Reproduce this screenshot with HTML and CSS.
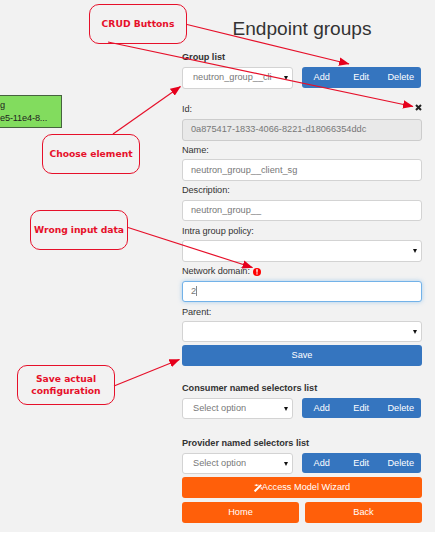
FILE: index.html
```html
<!DOCTYPE html>
<html lang="en">
<head>
<meta charset="utf-8">
<title>Endpoint groups</title>
<link rel="stylesheet" href="styles.css">
</head>
<body>
<div class="node"><div>g</div><div class="node-id">e5-11e4-8...</div></div>
<main class="panel">
  <h1>Endpoint groups</h1>
  <h2>Group list</h2>
  <div class="picker">
    <div class="field select"><span>neutron_group__cli</span></div>
    <div class="crud"><span>Add</span><span>Edit</span><span>Delete</span></div>
  </div>
  <div class="form">
    <div class="label first"><span>Id:</span>
      <svg class="close" viewBox="0 0 7 7"><path d="M1 1L6 6M6 1L1 6"/></svg>
    </div>
    <div class="field disabled">0a875417-1833-4066-8221-d18066354ddc</div>
    <div class="label">Name:</div>
    <div class="field">neutron_group__client_sg</div>
    <div class="label">Description:</div>
    <div class="field">neutron_group__</div>
    <div class="label">Intra group policy:</div>
    <div class="field select"></div>
    <div class="label"><span>Network domain:</span>
      <svg class="alert" viewBox="0 0 8 8"><circle cx="4" cy="4" r="4"/><path d="M3.2 1.3h1.6L4.5 4.7h-1zM3.4 5.3h1.2v1.2H3.4z"/></svg>
    </div>
    <div class="field focus">2<i class="caret"></i></div>
    <div class="label">Parent:</div>
    <div class="field select"></div>
  </div>
  <div class="btn save">Save</div>
  <h2 class="consumer">Consumer named selectors list</h2>
  <div class="picker">
    <div class="field select"><span>Select option</span></div>
    <div class="crud"><span>Add</span><span>Edit</span><span>Delete</span></div>
  </div>
  <h2 class="provider">Provider named selectors list</h2>
  <div class="picker">
    <div class="field select"><span>Select option</span></div>
    <div class="crud"><span>Add</span><span>Edit</span><span>Delete</span></div>
  </div>
  <div class="btn orange wizard">
    <svg viewBox="0 0 8 8"><path class="wand" d="M.6 7.4L7.2 .9"/><path d="M.7 1.2H4.6M2.4 .3v1.8M7.2 3.2v1.8"/></svg>Access Model Wizard
  </div>
  <div class="nav"><div class="btn orange">Home</div><div class="btn orange">Back</div></div>
</main>
<svg class="arrows" viewBox="0 0 435 533">
  <defs><marker id="head" markerUnits="userSpaceOnUse" markerWidth="11" markerHeight="9" refX="10" refY="4.5" orient="auto"><path d="M0 .3L10.5 4.5L0 8.7z"/></marker></defs>
  <path class="arrow" d="M187 24.5L349 64"/>
  <path class="arrow" d="M108 42L413 106.500"/>
  <path class="arrow" d="M113 134L180.500 86.500"/>
  <path class="arrow" d="M128 227.500L252.500 267.500"/>
  <path class="arrow" d="M114 386L179.500 359.500"/>
</svg>
<div class="callout crud-note">CRUD Buttons</div>
<div class="callout choose-note">Choose element</div>
<div class="callout wrong-note">Wrong input data</div>
<div class="callout save-note">Save actual<br>configuration</div>
</body>
</html>
```
FILE: styles.css
```css
* { box-sizing: border-box; }
body {
  margin: 0;
  position: relative;
  width: 435px;
  height: 533px;
  overflow: hidden;
  background: #f2f2f2;
  border-bottom: 1px solid #fff;
  color: #333;
  font: 9.2px/13px "Liberation Sans", Arial, sans-serif;
}
.panel { width: 240px; margin-left: 182px; }
h1 {
  margin: 0;
  padding-top: 16px;
  height: 51px;
  font-size: 19.1px;
  line-height: 25px;
  font-weight: 400;
  text-align: center;
}
h2 { margin: 0; height: 16px; font-size: 9.2px; line-height: 13px; font-weight: 700; letter-spacing: -.04px; }
.picker { display: flex; justify-content: space-between; height: 22px; }
.picker .field { width: 110.5px; padding: 0 20px 0 10px; }
.picker .field span { overflow: hidden; }
.field {
  position: relative;
  display: flex;
  align-items: center;
  height: 21.5px;
  padding: 0 8px;
  border: 1px solid #d3d3d3;
  border-radius: 3px;
  background: #fff;
  color: #777;
  white-space: nowrap;
}
.select::after {
  content: "";
  position: absolute;
  right: 4px;
  top: 8px;
  border: 2.2px solid transparent;
  border-top: 4px solid #111;
  border-bottom: 0;
}
.disabled { background: #e9e9e9; border-color: #ccc; }
.focus { border-color: #73b2e8; box-shadow: 0 0 4px rgba(102, 175, 233, .55); }
.caret { width: 1px; height: 10px; background: #888; }
.crud {
  display: grid;
  grid-template-columns: repeat(3, 39.5px);
  width: 118.5px;
  height: 20.5px;
  margin-right: 1.5px;
  border-radius: 3px;
  background: #3575bf;
  color: #fff;
  line-height: 20px;
  text-align: center;
}
.form { padding-top: 14px; }
.label { display: flex; align-items: center; height: 18.9px; padding-top: 1px; letter-spacing: -.07px; }
.label.first { height: 16px; justify-content: space-between; padding: 0 0 4px; }
.close { width: 7px; height: 7px; margin-top: -3px; stroke: #222; stroke-width: 2; }
.alert { width: 8px; height: 8px; margin-left: 3px; fill: #f00; }
.alert path { fill: #fff; }
.btn {
  height: 20.5px;
  border-radius: 3px;
  background: #3575bf;
  color: #fff;
  line-height: 21px;
  text-align: center;
}
.save { margin-top: 3px; }
.consumer { margin-top: 16px; }
.provider { margin-top: 17px; }
.orange { background: #ff5f0a; }
.wizard { display: flex; justify-content: center; align-items: center; margin-top: 2.500px; }
.wizard svg { width: 8px; height: 8px; fill: none; stroke: #fff; stroke-width: 1; }
.wizard .wand { stroke-width: 2; }
.nav { display: grid; grid-template-columns: 1fr 1fr; gap: 6px; margin-top: 4.500px; }
.node {
  position: absolute;
  left: 0;
  top: 95px;
  width: 61.500px;
  height: 33px;
  padding-top: 3px;
  border: 1px solid #46633f;
  border-left: 0;
  background: #82dc5e;
  color: #222;
  line-height: 12.5px;
  white-space: nowrap;
}
.node-id { letter-spacing: -.15px; }
.arrows { position: absolute; left: 0; top: 0; width: 435px; height: 533px; fill: none; stroke: #e6102a; stroke-width: 1.2; }
.arrows .arrow { marker-end: url(#head); }
.arrows marker path { fill: #e6001c; stroke: none; }
.callout {
  position: absolute;
  display: flex;
  align-items: center;
  justify-content: center;
  width: 98px;
  height: 39.5px;
  border: 1px solid #e6102a;
  border-radius: 10px;
  color: #e6102a;
  font: bold 9.2px/12px "DejaVu Sans", sans-serif;
  text-align: center;
  white-space: nowrap;
}
.crud-note { left: 89px; top: 4px; }
.choose-note { left: 42px; top: 134px; }
.wrong-note { left: 30px; top: 210px; letter-spacing: -.06px; }
.save-note { left: 17px; top: 365px; }
```
